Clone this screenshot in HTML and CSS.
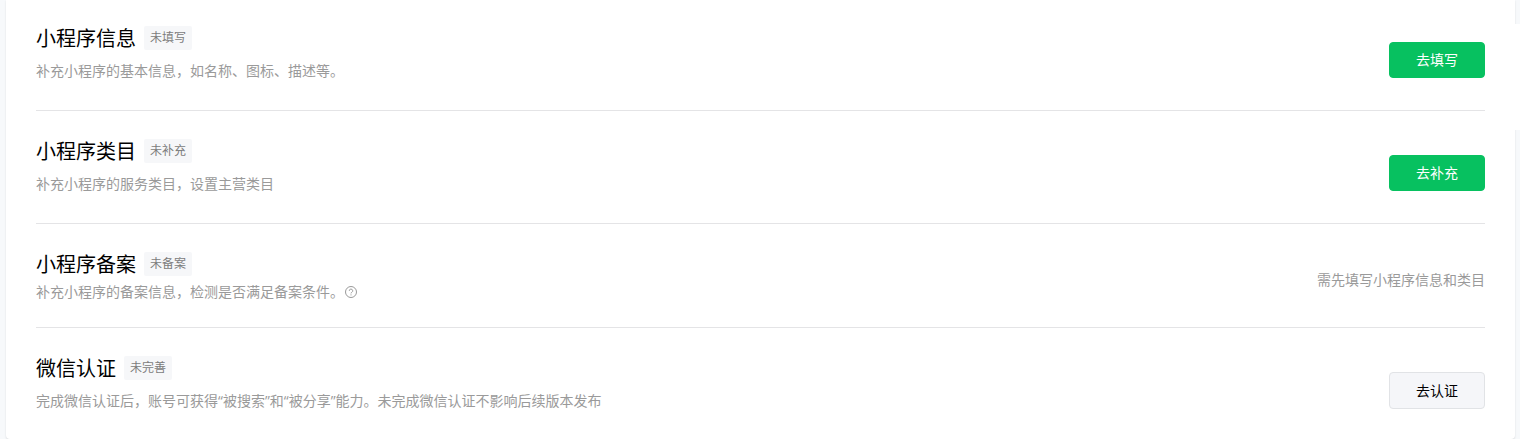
FILE: index.html
```html
<!DOCTYPE html>
<html lang="zh-CN">
<head>
<meta charset="utf-8">
<title>小程序发布流程</title>
<link rel="stylesheet" href="styles.css">
</head>
<body>
<main class="card">
  <section class="step">
    <div class="info">
      <header class="head"><h2 class="title">小程序信息</h2><span class="tag">未填写</span></header>
      <p class="desc">补充小程序的基本信息，如名称、图标、描述等。</p>
    </div>
    <button class="btn primary" type="button">去填写</button>
  </section>
  <section class="step">
    <div class="info">
      <header class="head"><h2 class="title">小程序类目</h2><span class="tag">未补充</span></header>
      <p class="desc">补充小程序的服务类目，设置主营类目</p>
    </div>
    <button class="btn primary" type="button">去补充</button>
  </section>
  <section class="step compact">
    <div class="info">
      <header class="head"><h2 class="title">小程序备案</h2><span class="tag">未备案</span></header>
      <p class="desc">补充小程序的备案信息，检测是否满足备案条件。<svg class="help" viewBox="0 0 14 14" aria-hidden="true"><circle cx="7" cy="7" r="5.5"/><path d="M5.3 5.8a1.7 1.7 0 1 1 2.5 1.5Q7 7.7 7 8.4"/><path d="M7 9.4v1"/></svg></p>
    </div>
    <p class="hint">需先填写小程序信息和类目</p>
  </section>
  <section class="step">
    <div class="info">
      <header class="head"><h2 class="title">微信认证</h2><span class="tag">未完善</span></header>
      <p class="desc">完成微信认证后，账号可获得“被搜索”和“被分享”能力。未完成微信认证不影响后续版本发布</p>
    </div>
    <button class="btn secondary" type="button">去认证</button>
  </section>
</main>
<div class="edge-mask"></div>
</body>
</html>
```
FILE: styles.css
```css
* {
  box-sizing: border-box;
}

body {
  margin: 0;
  background: #f7f9fb;
  font-family: "Open Sans", "Noto Sans CJK SC", sans-serif;
  font-size: 14px;
  line-height: 20px;
  overflow: hidden;
}

.card {
  margin: 0 5px 0 6px;
  padding: 0 30px;
  background: #fff;
  border-radius: 0 0 4px 4px;
  box-shadow: 0 1px 2px rgba(0, 0, 0, 0.12);
}

.step {
  display: flex;
  justify-content: space-between;
  align-items: flex-end;
  padding: 28px 0 29px;
  border-bottom: 1px solid #e4e4e6;
}

.step:first-child {
  padding-top: 26px;
}

.step:last-child {
  padding-bottom: 28px;
  border-bottom: 0;
}

.head {
  display: flex;
  align-items: flex-start;
  gap: 8px;
  height: 24px;
}

.title {
  margin: 0;
  color: #000;
  font-size: 20px;
  font-weight: 400;
  line-height: 26px;
}

.tag {
  padding: 0 6px;
  border-radius: 2px;
  background: #f6f7f9;
  color: #7c7c7c;
  font-size: 12px;
  line-height: 24px;
}

.desc {
  margin: 11px 0 0;
  color: #9a9a9a;
}

.compact {
  padding-bottom: 25px;
}

.compact .desc {
  display: flex;
  align-items: center;
  margin-top: 6px;
}

.help {
  width: 14px;
  height: 14px;
  fill: none;
  stroke: #9a9a9a;
  stroke-width: 1;
}

.hint {
  margin: 0 0 12px;
  color: #9a9a9a;
}

.btn {
  width: 96px;
  height: 36px;
  margin-bottom: 3px;
  padding: 0;
  border: 1px solid #e1e3e6;
  border-radius: 4px;
  background: #f5f6f9;
  color: #000;
  font: inherit;
}

.primary {
  border-color: #07c160;
  background: #07c160;
  color: #fff;
}

.secondary {
  height: 37px;
  margin-bottom: 2px;
}

.edge-mask {
  position: absolute;
  top: 24px;
  right: 0;
  width: 6px;
  height: 106px;
  background: #fff;
}
```
